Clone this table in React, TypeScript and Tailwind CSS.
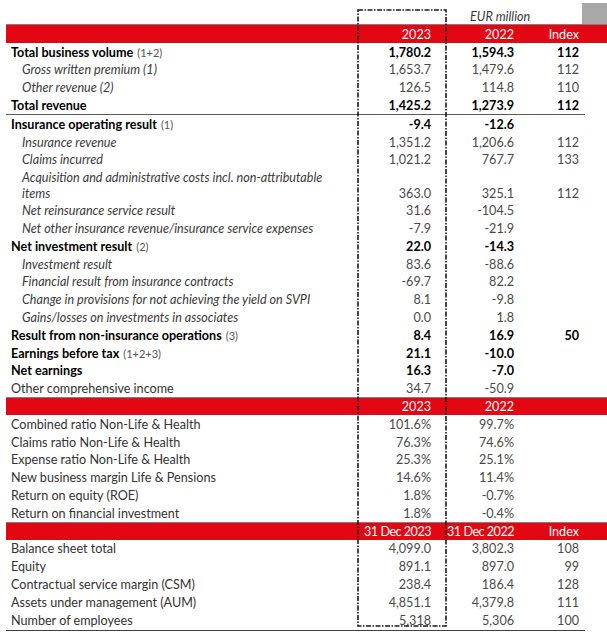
import React from "react";

type Kind = "bold" | "sub" | "plain";

interface Row {
  label: string;
  note?: string;
  v23?: string;
  v22?: string;
  idx?: string;
  kind: Kind;
  wrap?: string;
}

const incomeRows: Row[] = [
  { label: "Total business volume", note: "(1+2)", v23: "1,780.2", v22: "1,594.3", idx: "112", kind: "bold" },
  { label: "Gross written premium (1)", v23: "1,653.7", v22: "1,479.6", idx: "112", kind: "sub" },
  { label: "Other revenue (2)", v23: "126.5", v22: "114.8", idx: "110", kind: "sub" },
  { label: "Total revenue", v23: "1,425.2", v22: "1,273.9", idx: "112", kind: "bold" },
];

const resultRows: Row[] = [
  { label: "Insurance operating result", note: "(1)", v23: "-9.4", v22: "-12.6", kind: "bold" },
  { label: "Insurance revenue", v23: "1,351.2", v22: "1,206.6", idx: "112", kind: "sub" },
  { label: "Claims incurred", v23: "1,021.2", v22: "767.7", idx: "133", kind: "sub" },
  {
    label: "Acquisition and administrative costs incl. non-attributable",
    wrap: "items",
    v23: "363.0",
    v22: "325.1",
    idx: "112",
    kind: "sub",
  },
  { label: "Net reinsurance service result", v23: "31.6", v22: "-104.5", kind: "sub" },
  { label: "Net other insurance revenue/insurance service expenses", v23: "-7.9", v22: "-21.9", kind: "sub" },
  { label: "Net investment result", note: "(2)", v23: "22.0", v22: "-14.3", kind: "bold" },
  { label: "Investment result", v23: "83.6", v22: "-88.6", kind: "sub" },
  { label: "Financial result from insurance contracts", v23: "-69.7", v22: "82.2", kind: "sub" },
  { label: "Change in provisions for not achieving the yield on SVPI", v23: "8.1", v22: "-9.8", kind: "sub" },
  { label: "Gains/losses on investments in associates", v23: "0.0", v22: "1.8", kind: "sub" },
  { label: "Result from non-insurance operations", note: "(3)", v23: "8.4", v22: "16.9", idx: "50", kind: "bold" },
  { label: "Earnings before tax", note: "(1+2+3)", v23: "21.1", v22: "-10.0", kind: "bold" },
  { label: "Net earnings", v23: "16.3", v22: "-7.0", kind: "bold" },
  { label: "Other comprehensive income", v23: "34.7", v22: "-50.9", kind: "plain" },
];

const ratioRows: Row[] = [
  { label: "Combined ratio Non-Life & Health", v23: "101.6%", v22: "99.7%", kind: "plain" },
  { label: "Claims ratio Non-Life & Health", v23: "76.3%", v22: "74.6%", kind: "plain" },
  { label: "Expense ratio Non-Life & Health", v23: "25.3%", v22: "25.1%", kind: "plain" },
  { label: "New business margin Life & Pensions", v23: "14.6%", v22: "11.4%", kind: "plain" },
  { label: "Return on equity (ROE)", v23: "1.8%", v22: "-0.7%", kind: "plain" },
  { label: "Return on financial investment", v23: "1.8%", v22: "-0.4%", kind: "plain" },
];

const balanceRows: Row[] = [
  { label: "Balance sheet total", v23: "4,099.0", v22: "3,802.3", idx: "108", kind: "plain" },
  { label: "Equity", v23: "891.1", v22: "897.0", idx: "99", kind: "plain" },
  { label: "Contractual service margin (CSM)", v23: "238.4", v22: "186.4", idx: "128", kind: "plain" },
  { label: "Assets under management (AUM)", v23: "4,851.1", v22: "4,379.8", idx: "111", kind: "plain" },
  { label: "Number of employees", v23: "5,318", v22: "5,306", idx: "100", kind: "plain" },
];

const grid = "grid grid-cols-[346px_84px_83px_66px]";

function DataRow({ row }: { row: Row }) {
  const bold = row.kind === "bold";
  const numCls = bold ? "font-bold text-black" : "text-[#4a4a4a]";
  const tall = !!row.wrap;
  return (
    <div
      className={`${grid} ${tall ? "h-[33px] items-end" : "h-[17.8px] items-center pt-[1.5px]"} leading-[16px]`}
    >
      <div
        className={
          row.kind === "sub"
            ? "pl-[16px] italic text-[#3a3a3a]"
            : bold
            ? "pl-[5px] font-bold text-black"
            : "pl-[5px] text-[#333333]"
        }
      >
        {row.label}
        {row.note && <span className="ml-[4px] text-[11px] font-normal text-[#555555]">{row.note}</span>}
        {row.wrap && (
          <>
            <br />
            {row.wrap}
          </>
        )}
      </div>
      <div className={`pr-[5px] text-right ${numCls}`}>{row.v23}</div>
      <div className={`pr-[5px] text-right ${numCls}`}>{row.v22}</div>
      <div className={`pr-[6px] text-right ${numCls}`}>{row.idx}</div>
    </div>
  );
}

function RedBar({ cols, tall, tight }: { cols: string[]; tall?: boolean; tight?: boolean }) {
  return (
    <div
      className={`${grid} ${tall ? "h-[19px]" : "h-[17.8px]"} items-center border-t border-[#808080] bg-[#e30613] pt-[1px] leading-[16px] text-white`}
    >
      <div />
      <div className={`whitespace-nowrap pr-[5px] text-right ${tight ? "tracking-[-0.5px]" : ""}`}>{cols[0]}</div>
      <div className={`whitespace-nowrap pr-[5px] text-right ${tight ? "tracking-[-0.5px]" : ""}`}>{cols[1]}</div>
      <div className="pr-[6px] text-right">{cols[2]}</div>
    </div>
  );
}

export default function App() {
  return (
    <div
      className="relative h-[643px] w-[607px] overflow-hidden bg-white text-[12.6px]"
      style={{ fontFamily: "Lato, 'Noto Sans', sans-serif" }}
    >
      <div className="pl-[6px]">
        <div className={`${grid} h-[24px] items-center pt-[8px]`}>
          <div />
          <div />
          <div className="whitespace-nowrap pl-[34px] italic text-[#3a3a3a]">EUR million</div>
          <div />
        </div>
        <RedBar cols={["2023", "2022", "Index"]} tall />
        {incomeRows.map((r) => (
          <DataRow key={r.label} row={r} />
        ))}
        <div className="w-[579px] border-t border-[#5a5a5a]" />
        {resultRows.map((r) => (
          <DataRow key={r.label} row={r} />
        ))}
        <RedBar cols={["2023", "2022", ""]} />
        {ratioRows.map((r) => (
          <DataRow key={r.label} row={r} />
        ))}
        <RedBar cols={["31 Dec 2023", "31 Dec 2022", "Index"]} tight />
        {balanceRows.map((r) => (
          <DataRow key={r.label} row={r} />
        ))}
        <div className="mt-[1px] w-[579px] border-t border-[#404040]" />
      </div>

      {/* grey square in the top-right corner */}
      <div className="absolute left-[582px] top-[3px] h-[21px] w-[25px] bg-[#a8a8a8]" />

      {/* dash-dot highlight frame around the 2023 column */}
      <svg className="pointer-events-none absolute left-[357px] top-[9px]" width="91" height="619">
        <rect
          x="1"
          y="1"
          width="88"
          height="616"
          fill="none"
          stroke="#1a1a1a"
          strokeWidth="1.6"
          strokeDasharray="5 1.5 1.5 1.5"
        />
      </svg>
    </div>
  );
}
